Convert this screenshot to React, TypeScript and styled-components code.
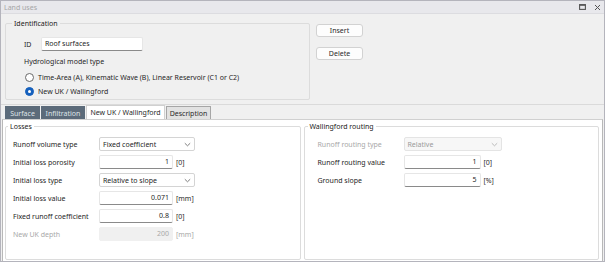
import styled, { createGlobalStyle } from "styled-components";

const GlobalStyle = createGlobalStyle`
  html, body {
    margin: 0;
    padding: 0;
  }
  body {
    font-family: "Noto Sans", "DejaVu Sans", sans-serif;
    font-size: 7px;
    color: #262626;
    background: #ffffff;
  }
  * {
    box-sizing: border-box;
  }
`;

const Window = styled.div`
  width: 605px;
  height: 262px;
  display: flex;
  flex-direction: column;
  background: #f0f0f0;
  border: 1px solid #b4b4bc;
  overflow: hidden;
`;

const TitleBar = styled.div`
  height: 13px;
  flex: none;
  display: flex;
  align-items: center;
  justify-content: space-between;
  padding: 0 3px 0 3px;
  background: #e8e8ec;
  color: #a6a6a6;
  border-bottom: 1px solid #dcdce0;
  .title-buttons {
    display: flex;
    gap: 8px;
    align-items: center;
  }
`;

const TopSection = styled.div`
  height: 91px;
  flex: none;
  display: flex;
  align-items: flex-start;
  gap: 6px;
  padding: 5px 0 0 4px;
  border-bottom: 1px solid #dadada;
`;

const GroupBox = styled.fieldset<{ $width?: number; $height: number }>`
  margin: 0;
  padding: 0;
  width: ${(p) => (p.$width ? `${p.$width}px` : "auto")};
  height: ${(p) => p.$height}px;
  border: 1px solid #dcdcdc;
  border-radius: 2px;
  min-width: 0;
`;

const Legend = styled.legend<{ $indent: number }>`
  margin-left: ${(p) => p.$indent}px;
  padding: 0 2px;
  line-height: 9px;
  color: #1a1a1a;
`;

const IdentBody = styled.div`
  padding-left: 18px;
  .id-row {
    margin-top: 9px;
    display: flex;
    align-items: center;
    height: 14px;
    .id-label {
      width: 17px;
    }
  }
  .model-caption {
    margin-top: 6px;
    height: 10px;
    line-height: 10px;
  }
`;

const TextBox = styled.div<{ $width: number; $align?: string; $disabled?: boolean }>`
  width: ${(p) => p.$width}px;
  height: 14px;
  line-height: 12px;
  padding: 0 3px;
  text-align: ${(p) => p.$align || "left"};
  background: ${(p) => (p.$disabled ? "#f0f0f0" : "#ffffff")};
  color: ${(p) => (p.$disabled ? "#a8a8a8" : "#262626")};
  border: 1px solid ${(p) => (p.$disabled ? "#f0f0f0" : "#e6e6e6")};
  border-bottom-color: ${(p) => (p.$disabled ? "#f0f0f0" : "#8a8a8a")};
  border-radius: 2px;
`;

const RadioRow = styled.div<{ $first?: boolean }>`
  display: flex;
  align-items: center;
  gap: 4px;
  height: 14px;
  margin: ${(p) => (p.$first ? "3px" : "0")} 0 0 1px;
`;

const RadioDot = styled.span<{ $checked?: boolean }>`
  width: 9px;
  height: 9px;
  border-radius: 50%;
  flex: none;
  display: flex;
  align-items: center;
  justify-content: center;
  background: ${(p) => (p.$checked ? "#1560bd" : "#ffffff")};
  border: 1px solid ${(p) => (p.$checked ? "#1560bd" : "#6a6a6a")};
  &::after {
    content: "";
    display: ${(p) => (p.$checked ? "block" : "none")};
    width: 3px;
    height: 3px;
    border-radius: 50%;
    background: #ffffff;
  }
`;

const ButtonColumn = styled.div`
  display: flex;
  flex-direction: column;
  gap: 10px;
  margin-top: 5px;
`;

const PushButton = styled.button`
  width: 47px;
  height: 13px;
  padding: 0;
  font: inherit;
  line-height: 11px;
  color: #2a2a2a;
  background: #fdfdfd;
  border: 1px solid #d2d2d2;
  border-radius: 3px;
`;

const TabStrip = styled.div`
  height: 14px;
  flex: none;
  display: flex;
  align-items: flex-end;
  gap: 1px;
  padding-left: 4px;
`;

const Tab = styled.div<{ $width: number; $kind: "dark" | "active" | "light" }>`
  width: ${(p) => p.$width}px;
  height: ${(p) => (p.$kind === "active" ? 14 : 13)}px;
  display: flex;
  align-items: center;
  justify-content: center;
  background: ${(p) =>
    p.$kind === "dark" ? "#5c6b7a" : p.$kind === "active" ? "#ffffff" : "#e2e2e2"};
  color: ${(p) => (p.$kind === "dark" ? "#dfe4e9" : "#2a2a2a")};
  border: 1px solid
    ${(p) => (p.$kind === "dark" ? "#5c6b7a" : p.$kind === "active" ? "#d0d0d0" : "#a6a6a6")};
  border-bottom: none;
`;

const TabPanel = styled.div`
  flex: 1;
  margin: 0 1px;
  display: grid;
  grid-template-columns: 1fr 1fr;
  gap: 3px;
  padding: 2px 3px 1px 2px;
  background: #ffffff;
  border: 1px solid #b8b8b8;
  border-top-color: #d0d0d0;
`;

const FieldGrid = styled.div<{ $inset: number }>`
  margin: 6px 0 0 ${(p) => p.$inset}px;
  display: grid;
  grid-template-columns: 86px 1fr;
  grid-auto-rows: 14px;
  row-gap: 4px;
  align-items: center;
`;

const FieldLabel = styled.span<{ $disabled?: boolean }>`
  color: ${(p) => (p.$disabled ? "#a8a8a8" : "#262626")};
  white-space: nowrap;
`;

const FieldControl = styled.div`
  display: flex;
  align-items: center;
  gap: 3px;
`;

const Unit = styled.span<{ $disabled?: boolean }>`
  color: ${(p) => (p.$disabled ? "#a8a8a8" : "#2a2a2a")};
`;

const Select = styled.div<{ $width: number; $disabled?: boolean }>`
  width: ${(p) => p.$width}px;
  height: 14px;
  display: flex;
  align-items: center;
  justify-content: space-between;
  padding: 0 3px 0 3px;
  background: ${(p) => (p.$disabled ? "#f7f7f7" : "#ffffff")};
  color: ${(p) => (p.$disabled ? "#9a9a9a" : "#262626")};
  border: 1px solid ${(p) => (p.$disabled ? "#e4e4e4" : "#d4d4d4")};
  border-radius: 2px;
`;

const Chevron = ({ color }: { color: string }) => (
  <svg width="7" height="5" viewBox="0 0 7 5">
    <path d="M0.8 1.2 L3.5 3.8 L6.2 1.2" fill="none" stroke={color} strokeWidth="0.9" />
  </svg>
);

type Row =
  | { kind: "select"; label: string; value: string; width: number; disabled?: boolean }
  | { kind: "input"; label: string; value: string; width: number; unit: string; disabled?: boolean };

const lossRows: Row[] = [
  { kind: "select", label: "Runoff volume type", value: "Fixed coefficient", width: 96 },
  { kind: "input", label: "Initial loss porosity", value: "1", width: 74, unit: "[0]" },
  { kind: "select", label: "Initial loss type", value: "Relative to slope", width: 96 },
  { kind: "input", label: "Initial loss value", value: "0.071", width: 74, unit: "[mm]" },
  { kind: "input", label: "Fixed runoff coefficient", value: "0.8", width: 74, unit: "[0]" },
  { kind: "input", label: "New UK depth", value: "200", width: 74, unit: "[mm]", disabled: true },
];

const routingRows: Row[] = [
  { kind: "select", label: "Runoff routing type", value: "Relative", width: 98, disabled: true },
  { kind: "input", label: "Runoff routing value", value: "1", width: 77, unit: "[0]" },
  { kind: "input", label: "Ground slope", value: "5", width: 77, unit: "[%]" },
];

const Fields = ({ rows, inset }: { rows: Row[]; inset: number }) => (
  <FieldGrid $inset={inset}>
    {rows.map((row) => [
      <FieldLabel key={row.label + "-l"} $disabled={row.disabled}>
        {row.label}
      </FieldLabel>,
      <FieldControl key={row.label + "-c"}>
        {row.kind === "select" ? (
          <Select $width={row.width} $disabled={row.disabled}>
            <span>{row.value}</span>
            <Chevron color={row.disabled ? "#b4b4b4" : "#6e6e6e"} />
          </Select>
        ) : (
          <>
            <TextBox $width={row.width} $align="right" $disabled={row.disabled}>
              {row.value}
            </TextBox>
            <Unit $disabled={row.disabled}>{row.unit}</Unit>
          </>
        )}
      </FieldControl>,
    ])}
  </FieldGrid>
);

export default function App() {
  return (
    <>
      <GlobalStyle />
      <Window>
        <TitleBar>
          <span>Land uses</span>
          <div className="title-buttons">
            <svg width="7" height="6" viewBox="0 0 7 6">
              <rect x="0.6" y="0.6" width="5.8" height="4.8" fill="none" stroke="#555" strokeWidth="1.1" />
              <line x1="0.6" y1="1.2" x2="6.4" y2="1.2" stroke="#555" strokeWidth="1.2" />
            </svg>
            <svg width="7" height="7" viewBox="0 0 7 7">
              <path d="M1 1 L6 6 M6 1 L1 6" stroke="#555" strokeWidth="1" />
            </svg>
          </div>
        </TitleBar>

        <TopSection>
          <GroupBox $width={305} $height={81}>
            <Legend $indent={6}>Identification</Legend>
            <IdentBody>
              <div className="id-row">
                <span className="id-label">ID</span>
                <TextBox $width={102}>Roof surfaces</TextBox>
              </div>
              <div className="model-caption">Hydrological model type</div>
              <RadioRow $first>
                <RadioDot />
                <span>Time-Area (A), Kinematic Wave (B), Linear Reservoir (C1 or C2)</span>
              </RadioRow>
              <RadioRow>
                <RadioDot $checked />
                <span>New UK / Wallingford</span>
              </RadioRow>
            </IdentBody>
          </GroupBox>
          <ButtonColumn>
            <PushButton type="button">Insert</PushButton>
            <PushButton type="button">Delete</PushButton>
          </ButtonColumn>
        </TopSection>

        <TabStrip>
          <Tab $width={35} $kind="dark">Surface</Tab>
          <Tab $width={44} $kind="dark">Infiltration</Tab>
          <Tab $width={79} $kind="active">New UK / Wallingford</Tab>
          <Tab $width={45} $kind="light">Description</Tab>
        </TabStrip>

        <TabPanel>
          <GroupBox $height={138}>
            <Legend $indent={2}>Losses</Legend>
            <Fields rows={lossRows} inset={7} />
          </GroupBox>
          <GroupBox $height={138}>
            <Legend $indent={3}>Wallingford routing</Legend>
            <Fields rows={routingRows} inset={13} />
          </GroupBox>
        </TabPanel>
      </Window>
    </>
  );
}
